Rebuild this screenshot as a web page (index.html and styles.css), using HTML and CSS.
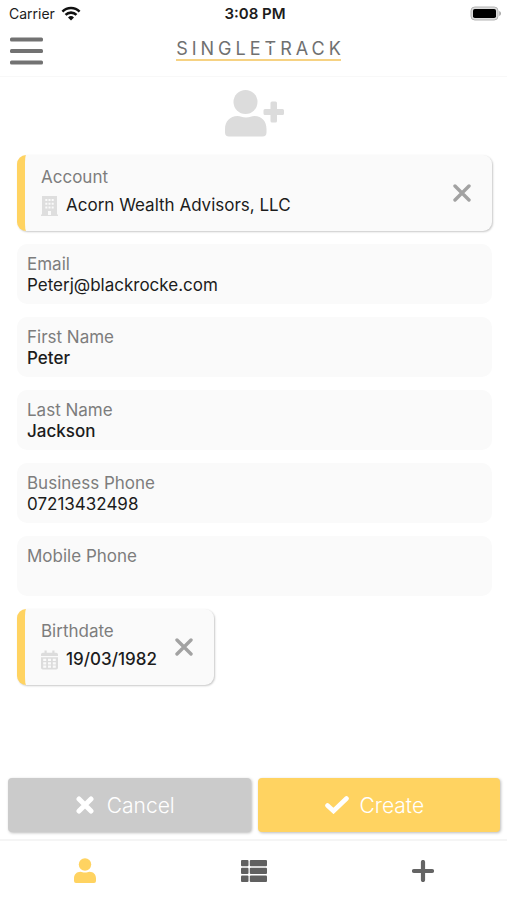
FILE: index.html
```html
<!DOCTYPE html>
<html lang="en">
<head>
<meta charset="utf-8">
<meta name="viewport" content="width=device-width, initial-scale=1">
<title>Singletrack</title>
<link rel="stylesheet" href="styles.css">
</head>
<body>
<div class="status">
  <div class="carrier">
    <span>Carrier</span>
    <svg width="20" height="15" viewBox="0 0 18 14" fill="none" stroke="#111" stroke-width="2.4" aria-hidden="true">
      <path d="M1 5.2a11.3 11.3 0 0 1 16 0"/>
      <path d="M3.9 8.3a7.2 7.2 0 0 1 10.2 0"/>
      <path d="M9 13.6 6.2 10.8a4 4 0 0 1 5.6 0z" fill="#111" stroke="none"/>
    </svg>
  </div>
  <span class="clock">3:08 PM</span>
  <div class="battery">
    <svg width="31" height="15" viewBox="0 0 31 15" aria-hidden="true">
      <rect x="1" y="1" width="27" height="13" rx="3.8" fill="#ddd" stroke="#b4b4b4"/>
      <rect x="3" y="3" width="23" height="9" rx="1.8" fill="#000"/>
      <path d="M29.2 5c2.4.7 2.4 4.300 0 5z" fill="#aaa"/>
    </svg>
  </div>
</div>
<header class="topbar">
  <button class="menu" type="button" aria-label="Menu">
    <svg width="33" height="28" viewBox="0 0 33 28" fill="#727272" aria-hidden="true">
      <rect width="33" height="4" rx="1.5" y="0.500"/><rect width="33" height="4" rx="1.5" y="12"/><rect width="33" height="4" rx="1.5" y="23.500"/>
    </svg>
  </button>
  <div class="logo">SINGLE<span class="logo-t">T</span>RAC<span class="logo-end">K</span></div>
</header>
<form class="page">
  <main class="content">
    <svg class="add-person" width="60" height="48" viewBox="0 0 60 48" fill="#dcdcdc" aria-hidden="true">
      <circle cx="20.500" cy="13" r="12"/>
      <path d="M12.500 27c3 0 4.500 1.600 8.500 1.600S26.500 27 29.500 27C37 27 41.500 32.500 41.500 40v3.500a4 4 0 0 1-4 4H4a4 4 0 0 1-4-4V40C0 32.500 5 27 12.500 27z"/>
      <path d="M47 12.500h3.500a1.500 1.500 0 0 1 1.500 1.500v6h5.500a1.500 1.500 0 0 1 1.500 1.500v3a1.500 1.500 0 0 1-1.500 1.500H52v6a1.500 1.500 0 0 1-1.500 1.500H47A1.500 1.500 0 0 1 45.500 32v-6h-5.500a1.500 1.500 0 0 1-1.500-1.500v-3A1.500 1.500 0 0 1 40 20h5.500v-6a1.500 1.500 0 0 1 1.500-1.500z"/>
    </svg>
    <div class="card">
      <div class="card-body">
        <label for="account">Account</label>
        <div class="card-value">
          <svg width="17" height="20" viewBox="0 0 17 20" aria-hidden="true">
            <path fill="#dedede" d="M1 0h15v18.500h1V20H0v-1.500h1z"/>
            <path fill="#fafafa" d="M4.300 3h2v2h-2zM7.500 3h2v2h-2zM10.700 3h2v2h-2zM4.300 6.800h2v2h-2zM7.500 6.800h2v2h-2zM10.700 6.800h2v2h-2zM4.300 10.600h2v2h-2zM10.700 10.600h2v2h-2zM7.500 10.600h2v2h-2zM7 15h3v4H7z"/>
          </svg>
          <input id="account" type="text" value="Acorn Wealth Advisors, LLC">
        </div>
      </div>
      <button class="clear" type="button" aria-label="Clear account">
        <svg width="18" height="18" viewBox="0 0 18 18" aria-hidden="true"><path d="m2 2 14 14M16 2 2 16" stroke="#a2a2a2" stroke-width="3.400" stroke-linecap="round"/></svg>
      </button>
    </div>
    <div class="field"><label for="email">Email</label><input id="email" type="email" value="Peterj@blackrocke.com"></div>
    <div class="field"><label for="first">First Name</label><input class="medium" id="first" type="text" value="Peter"></div>
    <div class="field"><label for="last">Last Name</label><input class="medium" id="last" type="text" value="Jackson"></div>
    <div class="field"><label for="business">Business Phone</label><input id="business" type="tel" value="07213432498"></div>
    <div class="field"><label for="mobile">Mobile Phone</label><input id="mobile" type="tel"></div>
    <div class="card card-date">
      <div class="card-body">
        <label for="birthdate">Birthdate</label>
        <div class="card-value">
          <svg width="17" height="20" viewBox="0 0 17 20" aria-hidden="true">
            <path fill="#dcdcdc" d="M3.500.5h2.200v2.300h5.600V.5h2.200v2.300h1.700A1.800 1.800 0 0 1 17 4.600V6H0V4.600a1.800 1.800 0 0 1 1.800-1.800h1.700zM0 7.200h17v10.500a1.800 1.800 0 0 1-1.800 1.800H1.800A1.800 1.800 0 0 1 0 17.700z"/>
            <path fill="#fafafa" d="M2.200 8.800h3v2.200h-3zM7 8.800h3v2.200H7zM11.800 8.800h3v2.200h-3zM2.200 12.200h3v2.200h-3zM7 12.200h3v2.200H7zM11.800 12.200h3v2.200h-3zM2.200 15.600h3v2.200h-3zM7 15.600h3v2.200H7zM11.800 15.600h3v2.200h-3z"/>
          </svg>
          <input class="medium" id="birthdate" type="text" value="19/03/1982">
        </div>
      </div>
      <button class="clear" type="button" aria-label="Clear birthdate">
        <svg width="18" height="18" viewBox="0 0 18 18" aria-hidden="true"><path d="m2 2 14 14M16 2 2 16" stroke="#a2a2a2" stroke-width="3.400" stroke-linecap="round"/></svg>
      </button>
    </div>
  </main>
  <div class="actions">
    <button class="action cancel" type="button">
      <svg width="18" height="18" viewBox="0 0 18 18" aria-hidden="true"><path d="m3 3 12 12M15 3 3 15" stroke="#fff" stroke-width="5" stroke-linecap="round"/></svg>
      Cancel
    </button>
    <button class="action create" type="submit">
      <svg width="24" height="18" viewBox="0 0 24 18" fill="none" aria-hidden="true"><path d="m2.500 9.500 6 5.500L21.500 2.500" stroke="#fff" stroke-width="4.600" stroke-linecap="round"/></svg>
      Create
    </button>
  </div>
</form>
<nav class="tabs">
  <a href="#contacts" aria-label="Contacts">
    <svg width="22" height="26" viewBox="0 0 22 26" fill="#ffd361" aria-hidden="true"><circle cx="11" cy="6.500" r="6.200"/><path d="M6.500 13.800c1.500 0 2.500.8 4.500.8s3-.8 4.500-.8c4 0 6.500 2.800 6.500 6.700v2.500a2 2 0 0 1-2 2H2a2 2 0 0 1-2-2v-2.500c0-3.900 2.500-6.700 6.500-6.700z"/></svg>
  </a>
  <a href="#list" aria-label="List">
    <svg width="26" height="22" viewBox="0 0 26 22" fill="#606060" aria-hidden="true"><rect width="7.500" height="6.300" rx="1"/><rect x="8.800" width="17.200" height="6.300" rx="1"/><rect y="7.800" width="7.500" height="6.300" rx="1"/><rect x="8.800" y="7.800" width="17.200" height="6.300" rx="1"/><rect y="15.600" width="7.500" height="6.300" rx="1"/><rect x="8.800" y="15.600" width="17.200" height="6.300" rx="1"/></svg>
  </a>
  <a href="#add" aria-label="Add">
    <svg width="22" height="22" viewBox="0 0 22 22" aria-hidden="true"><path d="M11 2v18M2 11h18" stroke="#646464" stroke-width="4.200" stroke-linecap="round"/></svg>
  </a>
</nav>
</body>
</html>
```
FILE: styles.css
```css
* { box-sizing: border-box; }

body {
  margin: 0;
  min-height: 100vh;
  display: flex;
  flex-direction: column;
  background: #fff;
  color: #1c1c1c;
  font: 17px/21px Inter, "Liberation Sans", sans-serif;
}

svg { display: block; flex: none; }

button {
  border: 0;
  padding: 0;
  background: none;
  font: inherit;
  cursor: pointer;
}

.status {
  display: grid;
  grid-template-columns: 1fr auto 1fr;
  align-items: center;
  height: 26px;
  padding: 0 6px 0 9px;
  font-size: 14px;
}

.carrier { display: flex; align-items: center; gap: 6px; }
.clock { font-size: 15px; font-weight: 600; }
.battery { justify-self: end; }

.topbar {
  display: grid;
  grid-template-columns: 1fr auto 1fr;
  align-items: center;
  height: 51px;
  padding: 0 0 0 10px;
  border-bottom: 1px solid #f8f8f8;
}

.menu { justify-self: start; }

.logo {
  margin-bottom: 4px;
  border-bottom: 2px solid #f6d283;
  color: #707070;
  font-size: 18px;
  letter-spacing: 4px;
}

.logo-t { position: relative; }
.logo-end { letter-spacing: 0; }

.logo-t::after {
  content: "";
  position: absolute;
  left: 0;
  top: 6px;
  width: 12px;
  height: 2px;
  background: #fff;
}

.page { flex: 1; display: flex; flex-direction: column; }

.content {
  flex: 1;
  display: flex;
  flex-direction: column;
  gap: 13px;
  padding: 12px 15px 24px 17px;
}

.add-person { align-self: center; margin-bottom: 5px; }

label { display: block; color: #7d7d7d; }

input {
  display: block;
  width: 100%;
  min-width: 0;
  height: 21px;
  padding: 0;
  border: 0;
  outline: 0;
  background: none;
  color: inherit;
  font: inherit;
}

.medium { font-weight: 500; }

.field {
  padding: 10px 10px 8px;
  border-radius: 10px;
  background: #fafafa;
}

.card {
  display: flex;
  align-items: center;
  padding: 0 21px 0 16px;
  border-left: 8px solid #ffd361;
  border-radius: 9px;
  background: #fafafa;
  box-shadow: 1px 1px 2px #c9c9c9;
}

.card-date { align-self: flex-start; width: 197px; }

.card-body { flex: 1; min-width: 0; padding: 12px 0 15px; }

.card-value {
  display: flex;
  align-items: center;
  gap: 8px;
  margin-top: 7px;
}

.actions {
  display: grid;
  grid-template-columns: 1fr 1fr;
  gap: 7px;
  padding: 0 7px 7px 8px;
}

.action {
  display: flex;
  align-items: center;
  justify-content: center;
  gap: 13px;
  height: 54px;
  padding-right: 8px;
  border-radius: 4px;
  color: #fff;
  font-size: 21px;
  font-weight: 300;
  box-shadow: 1px 1px 3px #bbb;
}

.cancel { background: #cbcbcb; }
.create { background: #ffd361; gap: 10px; }

.tabs {
  display: grid;
  grid-template-columns: repeat(3, 1fr);
  height: 61px;
  border-top: 2px solid #f5f5f5;
}

.tabs a { display: flex; align-items: center; justify-content: center; }
```
